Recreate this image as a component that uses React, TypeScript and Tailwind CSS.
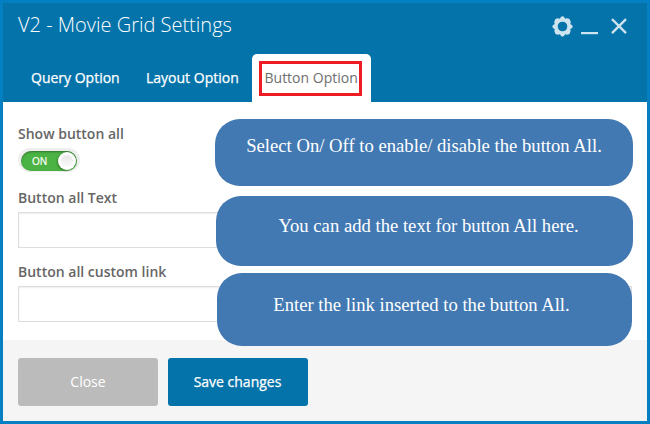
import type { ReactNode } from "react";

function Callout({ className, children }: { className: string; children: ReactNode }) {
  return (
    <div
      className={`absolute rounded-[25px] bg-[#4279b2] text-center whitespace-nowrap text-white font-['Liberation_Serif','Times_New_Roman',serif] text-[18.67px] leading-[22px] ${className}`}
    >
      {children}
    </div>
  );
}

function Field({ label }: { label: string }) {
  return (
    <label className="block h-[74px]">
      <span className="block h-[22px] text-sm leading-[22px] font-semibold">{label}</span>
      <input
        className="mt-[3px] block h-9 w-full border border-[#dddddd] bg-white px-2 shadow-[inset_0_1px_2px_rgba(0,0,0,0.07)] outline-none"
        type="text"
      />
    </label>
  );
}

export default function App() {
  return (
    <div className="relative flex h-[424px] w-[650px] flex-col overflow-hidden border-[3px] border-[#0480c2] bg-white font-['Open_Sans',sans-serif] text-[#666666]">
      <header className="flex h-[99px] flex-col justify-between bg-[#0473aa] text-white">
        <div className="flex items-start justify-between pr-[19px] pl-[15px]">
          <h1 className="pt-2 text-[20px] leading-[28px] font-light whitespace-nowrap">V2 - Movie Grid Settings</h1>
          <div className="flex items-center gap-[8px] pt-[13px] text-[#cde3ee]">
            <svg width="21" height="21" viewBox="-10.5 -10.5 21 21" fill="currentColor">
              <path
                fillRule="evenodd"
                d="M0-10.2Q1.6-10.2 2.6-7.8Q5-8.8 7.2-7.2Q8.8-5 7.8-2.6Q10.2-1.6 10.2 0Q10.2 1.6 7.8 2.6Q8.8 5 7.2 7.2Q5 8.8 2.6 7.8Q1.6 10.2 0 10.2Q-1.6 10.2-2.6 7.8Q-5 8.8-7.2 7.2Q-8.8 5-7.8 2.6Q-10.2 1.6-10.2 0Q-10.2-1.6-7.8-2.6Q-8.8-5-7.2-7.2Q-5-8.8-2.6-7.8Q-1.6-10.2 0-10.2ZM0-4.8A4.8 4.8 0 1 0 0 4.8A4.8 4.8 0 1 0 0-4.8Z"
              />
            </svg>
            <svg width="17" height="21" viewBox="0 0 17 21" fill="currentColor">
              <path d="M0 16H17V18.2H0Z" />
            </svg>
            <svg className="ml-[5px]" width="17" height="21" viewBox="0 0 17 21" fill="none" stroke="currentColor" strokeWidth="2.3">
              <path d="M1 3.1 15 17.1M15 3.1 1 17.1" />
            </svg>
          </div>
        </div>
        <nav className="flex h-12 items-stretch pl-[9px] text-sm whitespace-nowrap">
          <button className="w-[125px] pl-[19px] text-left font-medium [-webkit-text-stroke:0.25px_white]">Query Option</button>
          <button className="w-[115px] pl-[9px] text-left font-medium [-webkit-text-stroke:0.25px_white]">Layout Option</button>
          <button className="flex w-[119px] justify-center rounded-t-[5px] bg-white pt-[7px]">
            <span className="-ml-[3px] block h-[35px] w-[103px] border-[3px] border-[#ed1c24] pl-[3px] text-left leading-[28px] text-[#6e6e6e]">
              Button Option
            </span>
          </button>
        </nav>
      </header>

      <main className="h-[238px] px-[15px] pt-5">
        <div className="h-[65px]">
          <div className="h-[22px] text-sm leading-[24px] font-semibold">Show button all</div>
          <div className="mt-1 flex h-6 w-[62px] items-center justify-center rounded-full bg-[#eeeeee] pt-px">
            <div className="flex h-5 w-14 items-center justify-between rounded-full bg-[#4bb244] pr-px pl-[11px] shadow-[inset_0_1px_2px_rgba(0,0,0,0.35)]">
              <span className="text-[10px] leading-none font-medium text-white [-webkit-text-stroke:0.2px_white]">ON</span>
              <span className="flex size-[18px] items-center justify-center rounded-full bg-white shadow-[-1px_1px_2px_rgba(0,0,0,0.25)]">
                <span className="size-3 rounded-full bg-linear-to-b from-[#e8e8e8] to-[#fafafa]" />
              </span>
            </div>
          </div>
        </div>
        <Field label="Button all Text" />
        <Field label="Button all custom link" />
      </main>

      <footer className="flex h-[81px] gap-[10px] bg-[#f5f5f5] px-[15px] pt-[18px] text-sm text-white">
        <button className="h-12 w-[140px] rounded-[3px] bg-[#bbbbbb]">Close</button>
        <button className="h-12 w-[140px] rounded-[3px] bg-[#0473aa] pr-px font-medium [-webkit-text-stroke:0.25px_white]">Save changes</button>
      </footer>

      <Callout className="top-[116px] left-[212px] h-[67px] w-[418px] pt-4">
        Select On/ Off to enable/ disable the button All.
      </Callout>
      <Callout className="top-[193px] left-[213px] h-[70px] w-[417px] pt-[19px] pl-2">
        You can add the text for button All here.
      </Callout>
      <Callout className="top-[270px] left-[214px] h-[73px] w-[415px] pt-[21px] pr-1.5">
        Enter the link inserted to the button All.
      </Callout>
    </div>
  );
}
